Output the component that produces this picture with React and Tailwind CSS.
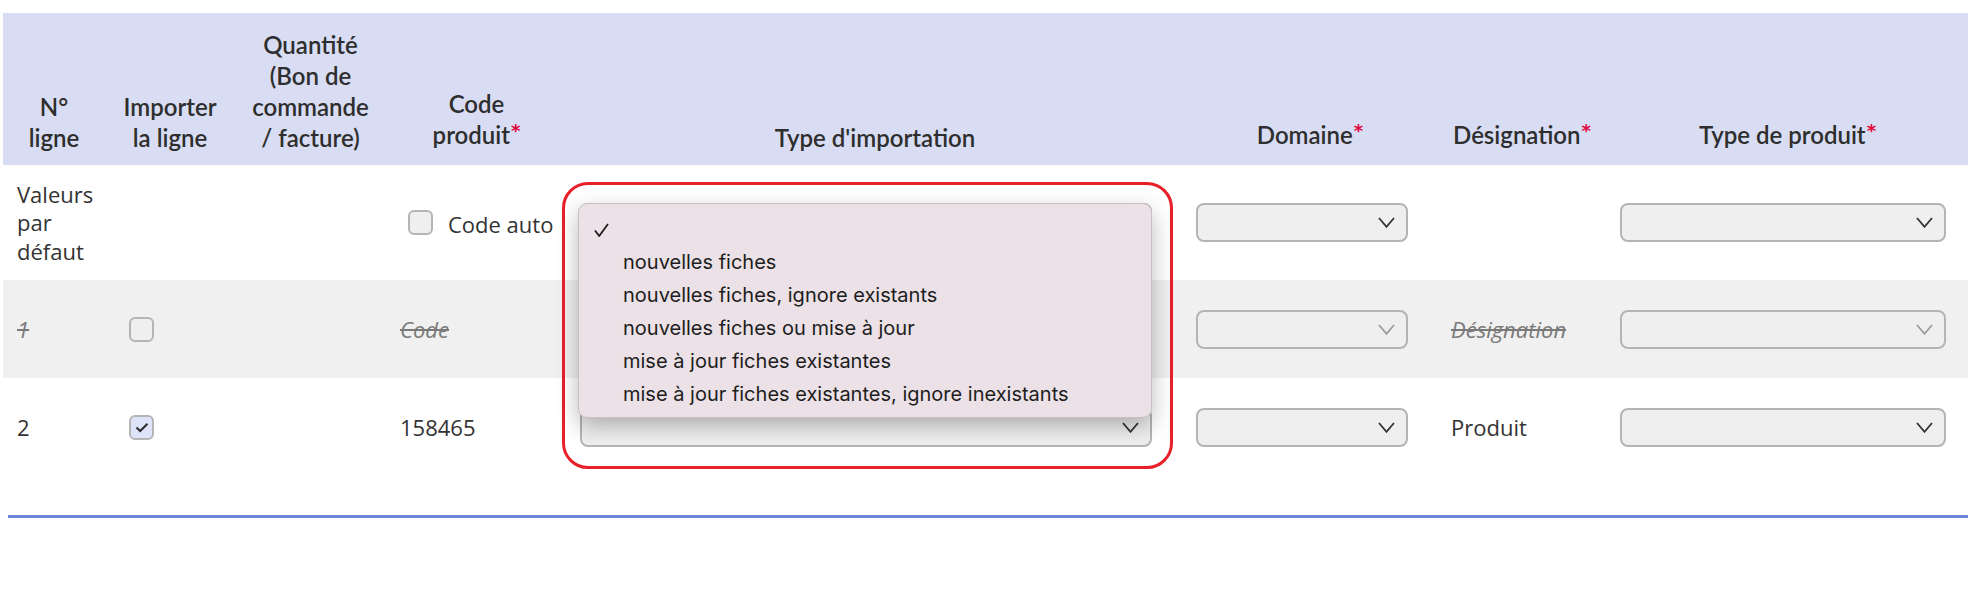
import clsx from "clsx";

const COLS =
  "grid grid-cols-[102px_130px_151px_181px_616px_254px_170px_361px] ml-[3px]";

const OPTIONS = [
  "nouvelles fiches",
  "nouvelles fiches, ignore existants",
  "nouvelles fiches ou mise à jour",
  "mise à jour fiches existantes",
  "mise à jour fiches existantes, ignore inexistants",
];

function Req() {
  return (
    <span className="relative -top-[7px] ml-[1px] font-['DejaVu_Sans',sans-serif] text-[18px] font-bold text-[#e0063f]">
      *
    </span>
  );
}

function Chevron({ muted }) {
  return (
    <svg
      width="17"
      height="11"
      viewBox="0 0 17 11"
      fill="none"
      className={muted ? "text-[#9c9c9c]" : "text-[#333]"}
    >
      <polyline points="1,1 8.5,9.8 16,1" stroke="currentColor" strokeWidth="1.8" />
    </svg>
  );
}

function Select({ width, muted }) {
  return (
    <div
      className={clsx(
        "ml-[13px] flex h-[39px] items-center justify-end rounded-[8px] border-2 border-[#b4b4b4] bg-[#efefef] pr-[11px]",
        width,
      )}
    >
      <Chevron muted={muted} />
    </div>
  );
}

function Checkbox({ checked }) {
  return (
    <span
      className={clsx(
        "flex size-[25px] shrink-0 items-center justify-center rounded-[6px] border-2 border-[#b5b5b5]",
        checked ? "bg-[#dde3f8]" : "bg-[#efefef]",
      )}
    >
      {checked && (
        <svg width="14" height="11" viewBox="0 0 14 11" fill="none">
          <polyline points="1.5,5.5 5.2,9 12.5,1.8" stroke="#2b2b2b" strokeWidth="2" />
        </svg>
      )}
    </span>
  );
}

function Struck({ children }) {
  return <span className="italic text-[#7a7a7a] line-through">{children}</span>;
}

export default function App() {
  return (
    <div className="relative h-[604px] w-[1968px] overflow-hidden bg-white font-['Open_Sans',sans-serif] text-[22px] leading-[28.5px] text-[#333]">
      {/* header */}
      <div
        className={clsx(
          COLS,
          "mt-[13px] h-[152px] items-end bg-[#d9ddf3] pb-[12px] font-['Lato',sans-serif] text-[24px] font-semibold leading-[31px] text-[#2e2e2e]",
        )}
      >
        <div className="text-center">
          N°
          <br />
          ligne
        </div>
        <div className="text-center">
          Importer
          <br />
          la ligne
        </div>
        <div className="text-center">
          Quantité
          <br />
          (Bon de
          <br />
          commande
          <br />/ facture)
        </div>
        <div className="text-center">
          Code
          <br />
          produit
          <Req />
        </div>
        <div className="text-center">Type d'importation</div>
        <div className="text-center">
          Domaine
          <Req />
        </div>
        <div className="text-center">
          Désignation
          <Req />
        </div>
        <div className="text-center">
          Type de produit
          <Req />
        </div>
      </div>

      {/* valeurs par défaut */}
      <div className={clsx(COLS, "h-[115px] items-center")}>
        <div className="pl-[14px]">
          Valeurs
          <br />
          par
          <br />
          défaut
        </div>
        <div />
        <div />
        <div className="flex items-center gap-[15px] pl-[22px]">
          <Checkbox />
          <span className="pt-[4px]">Code auto</span>
        </div>
        <Select width="w-[572px]" />
        <Select width="w-[212px]" />
        <div />
        <Select width="w-[326px]" />
      </div>

      {/* ligne 1 (ignorée) */}
      <div className={clsx(COLS, "h-[98px] items-center bg-[#f0f0f0]")}>
        <div className="pl-[14px]">
          <Struck>1</Struck>
        </div>
        <div className="pl-[24px]">
          <Checkbox />
        </div>
        <div />
        <div className="pl-[14px]">
          <Struck>Code</Struck>
        </div>
        <Select width="w-[572px]" muted />
        <Select width="w-[212px]" muted />
        <div className="pl-[14px]">
          <Struck>Désignation</Struck>
        </div>
        <Select width="w-[326px]" muted />
      </div>

      {/* ligne 2 */}
      <div className={clsx(COLS, "h-[98px] items-center")}>
        <div className="pl-[14px]">2</div>
        <div className="pl-[24px]">
          <Checkbox checked />
        </div>
        <div />
        <div className="pl-[14px]">158465</div>
        <Select width="w-[572px]" />
        <Select width="w-[212px]" />
        <div className="pl-[14px]">Produit</div>
        <Select width="w-[326px]" />
      </div>

      <div className="ml-[8px] mt-[39px] border-t-[3px] border-[#6f84d9]" />

      {/* annotation rouge */}
      <div className="pointer-events-none absolute left-[562px] top-[182px] h-[287px] w-[611px] rounded-[26px] border-[3px] border-[#e8202a]" />

      {/* menu déroulant ouvert */}
      <div className="absolute left-[578px] top-[203px] h-[215px] w-[574px] rounded-[9px] border border-[#c6c0c3] bg-[#ebe1e6] pt-[9px] font-['Inter',sans-serif] text-[20px] leading-[33px] text-[#1d1d1d] shadow-[0_8px_22px_rgba(0,0,0,0.28)]">
        <div className="flex h-[33px] items-center pl-[15px]">
          <svg width="15" height="14" viewBox="0 0 15 14" fill="none">
            <polyline points="1,7.5 5.2,13 14,1" stroke="#1d1d1d" strokeWidth="1.8" />
          </svg>
        </div>
        {OPTIONS.map((opt) => (
          <div key={opt} className="h-[33px] pl-[44px]">
            {opt}
          </div>
        ))}
      </div>
    </div>
  );
}
